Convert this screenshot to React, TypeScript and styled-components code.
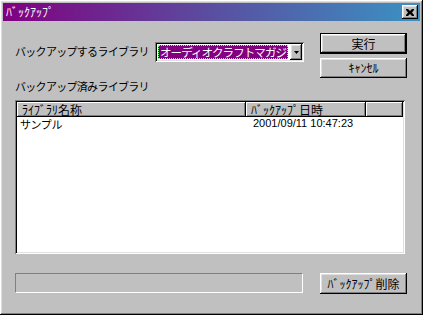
import styled, { createGlobalStyle } from "styled-components";

const GlobalStyle = createGlobalStyle`
  html, body {
    margin: 0;
    padding: 0;
    background: #c0c0c0;
  }
  body {
    font-family: "Liberation Sans", "Noto Sans CJK JP", sans-serif;
    font-size: 12px;
    color: #000;
  }
`;

const RAISED = `
  box-shadow: inset -1px -1px #000, inset 1px 1px #fff,
    inset -2px -2px #808080, inset 2px 2px #dfdfdf;
`;
const SUNKEN = `
  box-shadow: inset 1px 1px #808080, inset -1px -1px #fff,
    inset 2px 2px #000, inset -2px -2px #dfdfdf;
`;

const Window = styled.div`
  width: 423px;
  height: 315px;
  box-sizing: border-box;
  padding: 3px;
  background: #c0c0c0;
  ${RAISED}
  display: flex;
  flex-direction: column;
`;

const TitleBar = styled.div`
  height: 18px;
  display: flex;
  align-items: center;
  justify-content: space-between;
  padding: 0 2px 0 3px;
  background: linear-gradient(to right, #800080, #5a4ea0 50%, #3a92c2);
`;

const Title = styled.span`
  color: #fff;
  font-family: "Noto Sans CJK JP", sans-serif;
  font-size: 12px;
  line-height: 16px;
`;

const CloseButton = styled.div`
  width: 16px;
  height: 14px;
  background: #c0c0c0;
  ${RAISED}
  display: flex;
  align-items: center;
  justify-content: center;
`;

const Content = styled.div`
  padding: 12px 13px 0 12px;
  display: flex;
  flex-direction: column;
`;

const TopRow = styled.div`
  height: 45px;
  display: flex;
  justify-content: space-between;
`;

const PickRow = styled.div`
  display: flex;
  align-items: flex-start;
  padding-top: 9px;
`;

const Label = styled.div`
  font-family: "Noto Sans CJK JP", sans-serif;
  font-size: 11px;
  letter-spacing: -0.7px;
  line-height: 16px;
  white-space: nowrap;
`;

const PickLabel = styled(Label)`
  width: 140px;
  padding-top: 1px;
`;

const Combo = styled.div`
  width: 149px;
  height: 20px;
  box-sizing: border-box;
  padding: 2px;
  background: #fff;
  ${SUNKEN}
  display: flex;
  gap: 1px;
`;

const ComboValue = styled.div`
  flex: 1;
  margin: 1px;
  overflow: hidden;
  background: #800080;
  border: 1px dotted #80ff80;
  color: #fff;
  font-family: "Noto Sans CJK JP", sans-serif;
  font-size: 11.5px;
  letter-spacing: -0.9px;
  line-height: 12px;
  white-space: nowrap;
  padding-left: 1px;
`;

const ComboArrow = styled.div`
  width: 12px;
  height: 16px;
  background: #c0c0c0;
  ${RAISED}
  display: flex;
  align-items: center;
  justify-content: center;
`;

const ButtonCol = styled.div`
  display: flex;
  flex-direction: column;
  gap: 4px;
`;

const Button = styled.div<{ $default?: boolean; $h?: number }>`
  width: 87px;
  height: ${(p) => p.$h ?? 21}px;
  box-sizing: border-box;
  background: #c0c0c0;
  ${(p) => (p.$default ? "border: 1px solid #000;" : "")}
  ${RAISED}
  display: flex;
  align-items: center;
  justify-content: center;
  font-family: "Noto Sans CJK JP", sans-serif;
  font-size: 12px;
  line-height: 16px;
  white-space: nowrap;
`;

const ListLabel = styled(Label)`
  margin-top: 0;
`;

const ListView = styled.div`
  margin-top: 6px;
  width: 390px;
  height: 154px;
  box-sizing: border-box;
  padding: 2px;
  background: #fff;
  ${SUNKEN}
`;

const Columns = "229px 120px 1fr";

const Header = styled.div`
  display: grid;
  grid-template-columns: ${Columns};
  height: 15px;
`;

const HeaderCell = styled.div`
  background: #c0c0c0;
  box-shadow: inset -1px -1px #000, inset 1px 1px #fff,
    inset -2px -2px #808080;
  padding-left: 5px;
  font-family: "Noto Sans CJK JP", sans-serif;
  font-size: 12px;
  line-height: 15px;
  white-space: nowrap;
`;

const Row = styled.div`
  display: grid;
  grid-template-columns: ${Columns};
  height: 15px;
`;

const Cell = styled.div<{ $pad: number }>`
  padding-left: ${(p) => p.$pad}px;
  font-family: "Liberation Sans", "Noto Sans CJK JP", sans-serif;
  font-size: 11px;
  line-height: 13px;
  white-space: nowrap;
`;

const NameCell = styled(Cell)`
  font-family: "Noto Sans CJK JP", sans-serif;
  letter-spacing: -0.4px;
  line-height: 15px;
`;

const BottomRow = styled.div`
  margin-top: 19px;
  display: flex;
  justify-content: space-between;
  align-items: flex-start;
`;

const Progress = styled.div`
  width: 288px;
  height: 20px;
  box-sizing: border-box;
  border-top: 1px solid #808080;
  border-left: 1px solid #808080;
  border-right: 1px solid #fff;
  border-bottom: 1px solid #fff;
`;

export default function App() {
  return (
    <>
      <GlobalStyle />
      <Window>
        <TitleBar>
          <Title>ﾊﾞｯｸｱｯﾌﾟ</Title>
          <CloseButton>
            <svg width="8" height="7" viewBox="0 0 8 7">
              <path
                d="M0 0h2l2 2 2-2h2v1L6 3.5 8 6v1H6L4 5 2 7H0V6l2-2.5L0 1z"
                fill="#000"
              />
            </svg>
          </CloseButton>
        </TitleBar>
        <Content>
          <TopRow>
            <PickRow>
              <PickLabel>バックアップするライブラリ</PickLabel>
              <Combo>
                <ComboValue>オーディオクラフトマガジン</ComboValue>
                <ComboArrow>
                  <svg width="5" height="3" viewBox="0 0 5 3">
                    <path d="M0 0h5L2.5 3z" fill="#000" />
                  </svg>
                </ComboArrow>
              </Combo>
            </PickRow>
            <ButtonCol>
              <Button $default>実行</Button>
              <Button $h={20}>ｷｬﾝｾﾙ</Button>
            </ButtonCol>
          </TopRow>
          <ListLabel>バックアップ済みライブラリ</ListLabel>
          <ListView>
            <Header>
              <HeaderCell>ﾗｲﾌﾞﾗﾘ名称</HeaderCell>
              <HeaderCell>ﾊﾞｯｸｱｯﾌﾟ日時</HeaderCell>
              <HeaderCell />
            </Header>
            <Row>
              <NameCell $pad={3}>サンプル</NameCell>
              <Cell $pad={7}>2001/09/11 10:47:23</Cell>
              <Cell $pad={0} />
            </Row>
          </ListView>
          <BottomRow>
            <Progress />
            <Button>ﾊﾞｯｸｱｯﾌﾟ削除</Button>
          </BottomRow>
        </Content>
      </Window>
    </>
  );
}
